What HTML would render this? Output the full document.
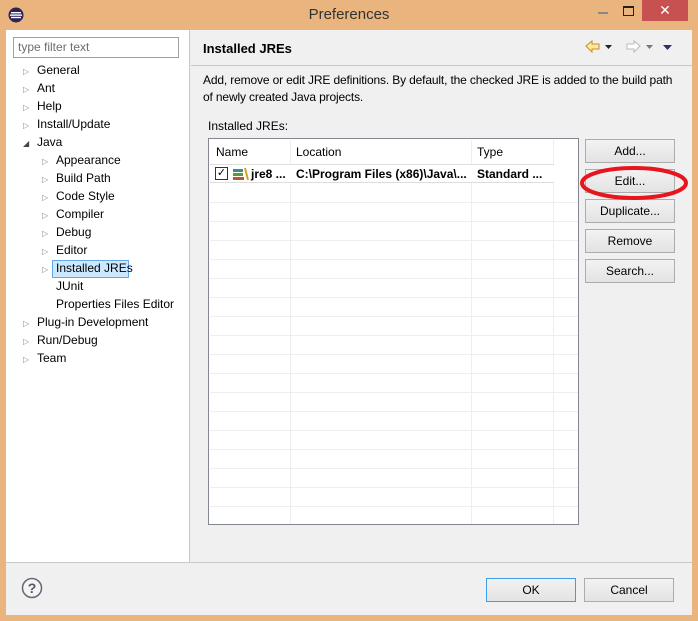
<!DOCTYPE html>
<html><head><style>
*{margin:0;padding:0;box-sizing:border-box}
body{width:698px;height:621px;background:#eab47f;font-family:"Liberation Sans",sans-serif;font-size:12px;color:#000;position:relative;overflow:hidden}
.a{position:absolute}
.title{left:0;top:0;width:698px;height:30px;text-align:center;line-height:30px;font-size:15px;color:#333}
.client{left:6px;top:30px;width:686px;height:585px;background:#f0f0f0}
.left{left:6px;top:30px;width:184px;height:532px;background:#fff;border-right:1px solid #c8c8c8}
.tree div{position:absolute;white-space:nowrap}
.tri{font-size:8px;color:#888}
.btn{position:absolute;width:90px;height:24px;border:1px solid #acacac;background:linear-gradient(#f2f2f2,#e3e3e3);text-align:center;line-height:22px}
.row{position:absolute;left:1px;width:368px;height:1px;background:#eeeeee}
.col{position:absolute;top:1px;width:1px;height:384px;background:#eeeeee}
</style></head><body>
<div class="a title">Preferences</div>
<svg class="a" style="left:8px;top:7px" width="16" height="16"><circle cx="8" cy="8" r="7.5" fill="#2c2255"/><rect x="3" y="5" width="10" height="1.4" fill="#fff"/><rect x="2" y="7.4" width="12" height="1.4" fill="#fff"/><rect x="3" y="9.8" width="10" height="1.4" fill="#fff"/></svg>
<div class="a" style="left:598px;top:12px;width:10px;height:2px;background:#888"></div>
<div class="a" style="left:623px;top:6px;width:11px;height:10px;border:1px solid #222;border-top-width:2px"></div>
<div class="a" style="left:642px;top:0;width:46px;height:21px;background:#c75050;color:#fff;text-align:center;line-height:21px;font-size:14px">✕</div>
<div class="a client"></div>
<div class="a left"></div>
<div class="a" style="left:13px;top:37px;width:166px;height:21px;border:1px solid #a0a0a0;background:#fff;color:#6d6d6d;padding-left:4px;line-height:19px">type filter text</div>
<div class="tree">
<div class="tri" style="left:23px;top:67px">▷</div><div style="left:37px;top:63px">General</div>
<div class="tri" style="left:23px;top:85px">▷</div><div style="left:37px;top:81px">Ant</div>
<div class="tri" style="left:23px;top:103px">▷</div><div style="left:37px;top:99px">Help</div>
<div class="tri" style="left:23px;top:121px">▷</div><div style="left:37px;top:117px">Install/Update</div>
<div class="tri" style="left:23px;top:139px;color:#444">◢</div><div style="left:37px;top:135px">Java</div>
<div class="tri" style="left:42px;top:157px">▷</div><div style="left:56px;top:153px">Appearance</div>
<div class="tri" style="left:42px;top:175px">▷</div><div style="left:56px;top:171px">Build Path</div>
<div class="tri" style="left:42px;top:193px">▷</div><div style="left:56px;top:189px">Code Style</div>
<div class="tri" style="left:42px;top:211px">▷</div><div style="left:56px;top:207px">Compiler</div>
<div class="tri" style="left:42px;top:229px">▷</div><div style="left:56px;top:225px">Debug</div>
<div class="tri" style="left:42px;top:247px">▷</div><div style="left:56px;top:243px">Editor</div>
<div class="tri" style="left:42px;top:265px">▷</div><div style="left:52px;top:260px;width:77px;height:18px;background:#cce8ff;border:1px solid #66a7e8"></div><div style="left:56px;top:261px">Installed JREs</div>
<div style="left:56px;top:279px">JUnit</div>
<div style="left:56px;top:297px">Properties Files Editor</div>
<div class="tri" style="left:23px;top:319px">▷</div><div style="left:37px;top:315px">Plug-in Development</div>
<div class="tri" style="left:23px;top:337px">▷</div><div style="left:37px;top:333px">Run/Debug</div>
<div class="tri" style="left:23px;top:355px">▷</div><div style="left:37px;top:351px">Team</div>
</div>
<div class="a" style="left:203px;top:41px;font-weight:bold;font-size:13px">Installed JREs</div>
<svg class="a" style="left:584px;top:38px" width="100" height="18"><path d="M2 8 L8 3 V6 H15 V11 H8 V14 Z" fill="#fde8a8" stroke="#c89020"/><path d="M21 7 h7 l-3.5 4z" fill="#222"/><path d="M56 8 L50 3 V6 H43 V11 H50 V14 Z" fill="#fff" stroke="#bbb"/><path d="M62 7 h7 l-3.5 4z" fill="#777"/><path d="M79 7 h9 l-4.5 5z" fill="#3a2a6a"/></svg>
<div class="a" style="left:191px;top:65px;width:501px;height:1px;background:#c8c8c8"></div>
<div class="a" style="left:203px;top:72px;line-height:17px;white-space:nowrap;letter-spacing:-0.15px">Add, remove or edit JRE definitions. By default, the checked JRE is added to the build path<br>of newly created Java projects.</div>
<div class="a" style="left:208px;top:119px">Installed JREs:</div>
<div class="a" style="left:208px;top:138px;width:371px;height:387px;border:1px solid #828790;background:#fff">
<div class="col" style="left:81px"></div><div class="col" style="left:262px"></div><div class="col" style="left:344px"></div>
<div class="a" style="left:7px;top:6px">Name</div><div class="a" style="left:87px;top:6px">Location</div><div class="a" style="left:268px;top:6px">Type</div>
<div class="a" style="left:1px;top:25px;width:344px;height:19px;border-top:1px solid #ddd;border-bottom:1px solid #ddd;background:#fff"></div>
<div class="a" style="left:6px;top:28px;width:13px;height:13px;border:1px solid #333;font-size:11px;line-height:11px;text-align:center">✓</div>
<svg class="a" style="left:24px;top:28px" width="16" height="14"><rect x="0" y="2" width="10" height="3" fill="#3a8a9a"/><rect x="0" y="6" width="10" height="3" fill="#5a9a3a"/><rect x="0" y="10" width="11" height="3" fill="#b85a2a"/><path d="M12 1 L15 13" stroke="#d8a020" stroke-width="2"/></svg>
<div class="a" style="left:42px;top:28px;font-weight:bold">jre8 ...</div>
<div class="a" style="left:87px;top:28px;font-weight:bold">C:\Program Files (x86)\Java\...</div>
<div class="a" style="left:268px;top:28px;font-weight:bold">Standard ...</div>
<div class="row" style="top:63px"></div><div class="row" style="top:82px"></div><div class="row" style="top:101px"></div><div class="row" style="top:120px"></div><div class="row" style="top:139px"></div><div class="row" style="top:158px"></div><div class="row" style="top:177px"></div><div class="row" style="top:196px"></div><div class="row" style="top:215px"></div><div class="row" style="top:234px"></div><div class="row" style="top:253px"></div><div class="row" style="top:272px"></div><div class="row" style="top:291px"></div><div class="row" style="top:310px"></div><div class="row" style="top:329px"></div><div class="row" style="top:348px"></div><div class="row" style="top:367px"></div>
</div>
<div class="btn" style="left:585px;top:139px">Add...</div>
<div class="btn" style="left:585px;top:169px">Edit...</div>
<div class="btn" style="left:585px;top:199px">Duplicate...</div>
<div class="btn" style="left:585px;top:229px">Remove</div>
<div class="btn" style="left:585px;top:259px">Search...</div>
<svg class="a" style="left:578px;top:163px" width="112" height="40"><ellipse cx="56" cy="20" rx="52" ry="15" fill="none" stroke="#e8141e" stroke-width="4"/></svg>
<div class="a" style="left:6px;top:562px;width:686px;height:1px;background:#c8c8c8"></div>
<svg class="a" style="left:21px;top:577px" width="22" height="22"><circle cx="11" cy="11" r="9.5" fill="#f4f4f4" stroke="#667"  stroke-width="1.5"/><text x="11" y="16" text-anchor="middle" font-family="Liberation Sans" font-size="14" font-weight="bold" fill="#556">?</text></svg>
<div class="btn" style="left:486px;top:578px;border-color:#3c9ee8">OK</div>
<div class="btn" style="left:584px;top:578px">Cancel</div>
</body></html>
